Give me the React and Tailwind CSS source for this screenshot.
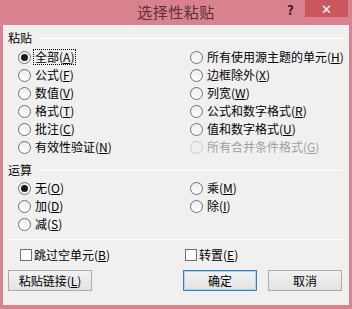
import React from 'react';

const font = { fontFamily: '"Noto Sans CJK SC", "DejaVu Sans", sans-serif' };

function Label({ text, k }) {
  return (
    <span className="whitespace-nowrap">
      {text}(<span className="underline">{k}</span>)
    </span>
  );
}

function Radio({ checked, disabled, text, k, focus }) {
  return (
    <div className={`flex items-center h-[18px] ${disabled ? 'text-[#a0a0a0]' : 'text-black'}`}>
      <span
        className={`w-[13px] h-[13px] rounded-full border flex items-center justify-center shrink-0 ${
          disabled ? 'border-[#c8c8c8] bg-[#f0f0f0]' : 'border-[#707070] bg-gradient-to-b from-[#ececec] to-white'
        }`}
      >
        {checked && <span className="w-[7px] h-[7px] rounded-full bg-[#1a1a1a]" />}
      </span>
      <span className={`ml-[3px] leading-[14px] px-[1px] ${focus ? 'outline outline-1 outline-dotted outline-black' : ''}`}>
        <Label text={text} k={k} />
      </span>
    </div>
  );
}

function Check({ text, k }) {
  return (
    <div className="flex items-center h-[18px]">
      <span className="w-[12px] h-[12px] border border-[#707070] bg-white shrink-0" />
      <span className="ml-[2px] leading-[14px]">
        <Label text={text} k={k} />
      </span>
    </div>
  );
}

function Group({ title }) {
  return (
    <div className="flex items-center h-[14px]">
      <span className="leading-[14px]">{title}</span>
      <div className="flex-1 ml-[6px] mr-[2px] h-px bg-[#dcdcdc] border-b border-white" />
    </div>
  );
}

function Btn({ children, primary, className }) {
  return (
    <div
      className={`h-[21px] flex items-center justify-center border bg-gradient-to-b from-[#f2f2f2] to-[#e3e3e3] ${
        primary ? 'border-[#3c7fb1] shadow-[inset_0_0_0_1px_#a8d3f5]' : 'border-[#acacac]'
      } ${className}`}
    >
      {children}
    </div>
  );
}

export default function App() {
  return (
    <div className="w-[352px] h-[309px] bg-[#d8828f] flex flex-col text-[12px] text-black overflow-hidden" style={font}>
      <div className="h-[25px] relative flex items-center justify-center shrink-0">
        <span className="text-[15px] text-[#5b3036] tracking-[0.5px]">选择性粘贴</span>
        <span className="absolute left-[287px] top-[0px] text-[13px] font-bold text-[#3a1a1e]">?</span>
        <div className="absolute left-[305px] top-0 w-[43px] h-[17px] bg-[#c9575d] flex items-center justify-center text-white text-[13px] font-bold">
          ✕
        </div>
      </div>
      <div className="flex-1 mx-[3px] mb-[4px] bg-[#f0f0f0] pl-[5px] pr-[3px] flex flex-col">
        <div className="mt-[6px]">
          <Group title="粘贴" />
        </div>
        <div className="mt-[3px] grid grid-cols-[172px_1fr] pl-[10px]">
          <div className="flex flex-col">
            <Radio checked focus text="全部" k="A" />
            <Radio text="公式" k="F" />
            <Radio text="数值" k="V" />
            <Radio text="格式" k="T" />
            <Radio text="批注" k="C" />
            <Radio text="有效性验证" k="N" />
          </div>
          <div className="flex flex-col">
            <Radio text="所有使用源主题的单元" k="H" />
            <Radio text="边框除外" k="X" />
            <Radio text="列宽" k="W" />
            <Radio text="公式和数字格式" k="R" />
            <Radio text="值和数字格式" k="U" />
            <Radio disabled text="所有合并条件格式" k="G" />
          </div>
        </div>
        <div className="mt-[7px]">
          <Group title="运算" />
        </div>
        <div className="mt-[2px] grid grid-cols-[172px_1fr] pl-[10px]">
          <div className="flex flex-col">
            <Radio checked text="无" k="O" />
            <Radio text="加" k="D" />
            <Radio text="减" k="S" />
          </div>
          <div className="flex flex-col">
            <Radio text="乘" k="M" />
            <Radio text="除" k="I" />
          </div>
        </div>
        <div className="mt-[6px] mr-[2px] h-px bg-[#dcdcdc] border-b border-white" />
        <div className="mt-[6px] grid grid-cols-[165px_1fr] pl-[12px]">
          <Check text="跳过空单元" k="B" />
          <Check text="转置" k="E" />
        </div>
        <div className="mt-[6px] flex">
          <Btn className="w-[84px]">
            <Label text="粘贴链接" k="L" />
          </Btn>
          <Btn primary className="w-[74px] ml-[91px]">确定</Btn>
          <Btn className="w-[74px] ml-[11px]">取消</Btn>
        </div>
      </div>
    </div>
  );
}
